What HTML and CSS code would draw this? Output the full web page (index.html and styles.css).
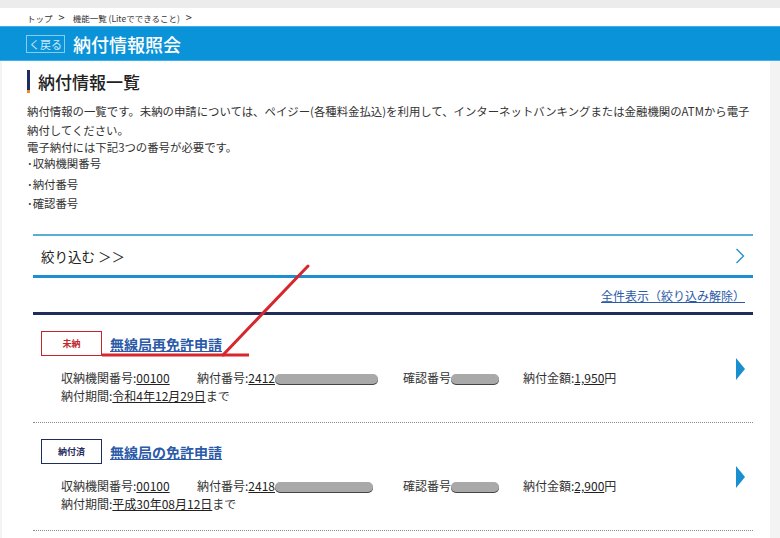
FILE: index.html
```html
<!DOCTYPE html>
<html lang="ja">
<head>
<meta charset="utf-8">
<title>納付情報照会</title>
<link rel="stylesheet" href="styles.css">
</head>
<body>
<div class="topbar"></div>
<div class="crumbs">トップ<span class="sep">&gt;</span>機能一覧 (Liteでできること)<span class="sep">&gt;</span></div>
<header class="header">
  <a class="back">く戻る</a>
  <h1 class="title">納付情報照会</h1>
</header>
<main class="page">
  <h2 class="heading">納付情報一覧</h2>
  <div class="intro">
    <p class="intro-p">納付情報の一覧です。未納の申請については、ペイジー(各種料金払込)を利用して、インターネットバンキングまたは金融機関のATMから電子<br>納付してください。</p>
    <p class="intro-need">電子納付には下記3つの番号が必要です。<br>･収納機関番号</p>
    <p class="intro-li first">･納付番号</p>
    <p class="intro-li">･確認番号</p>
  </div>

  <div class="content">
    <div class="filter">
      <span class="filter-label">絞り込む ＞＞</span>
      <svg class="filter-chev" width="10" height="16" viewBox="0 0 10 16"><polyline points="1.5,1 8.5,8 1.5,15" fill="none" stroke="#2a8fcc" stroke-width="1.4"/></svg>
    </div>
    <div class="reset"><a class="reset-link">全件表示（絞り込み解除）</a></div>

    <div class="item">
      <div class="item-main">
        <div class="item-head">
          <span class="badge badge-unpaid">未納</span>
          <a class="item-title">無線局再免許申請</a>
        </div>
        <div class="detail">
          <span class="col c1">収納機関番号:<u>00100</u></span><span class="col c2">納付番号:<u>2412</u><span class="mask m-long"></span></span><span class="col c3">確認番号<span class="mask m-short"></span></span><span class="col c4">納付金額:<u>1,950</u>円</span>
        </div>
        <div class="detail">納付期間:<u>令和4年12月29日</u>まで</div>
      </div>
      <svg class="arrow" width="9" height="22" viewBox="0 0 9 22"><polygon points="0,0 9,11 0,22" fill="#1a8fd0"/></svg>
    </div>

    <div class="item">
      <div class="item-main">
        <div class="item-head">
          <span class="badge badge-paid">納付済</span>
          <a class="item-title">無線局の免許申請</a>
        </div>
        <div class="detail">
          <span class="col c1">収納機関番号:<u>00100</u></span><span class="col c2">納付番号:<u>2418</u><span class="mask m-long2"></span></span><span class="col c3">確認番号<span class="mask m-short"></span></span><span class="col c4">納付金額:<u>2,900</u>円</span>
        </div>
        <div class="detail">納付期間:<u>平成30年08月12日</u>まで</div>
      </div>
      <svg class="arrow" width="9" height="22" viewBox="0 0 9 22"><polygon points="0,0 9,11 0,22" fill="#1a8fd0"/></svg>
    </div>
  </div>
</main>
<svg class="annot" width="780" height="538" viewBox="0 0 780 538">
  <line x1="308" y1="266" x2="223" y2="355" stroke="#d7262c" stroke-width="3" stroke-linecap="round"/>
  <line x1="102" y1="355" x2="249" y2="355" stroke="#d7262c" stroke-width="3"/>
</svg>
</body>
</html>
```

FILE: styles.css
```css
html, body {
  margin: 0;
  padding: 0;
}
body {
  width: 780px;
  height: 538px;
  overflow: hidden;
  position: relative;
  background: #f3f3f3;
  font-family: "Noto Sans CJK JP", "Noto Sans", sans-serif;
  color: #333;
}
.topbar {
  height: 8px;
  background: #ececec;
}
.crumbs {
  height: 18px;
  line-height: 18px;
  background: #fff;
  padding-left: 27px;
  font-size: 8.5px;
  color: #333;
}
.crumbs .sep {
  font-size: 11px;
  margin: 0 8px 0 6px;
}
.header {
  height: 33px;
  background: #0a93d8;
  border-top: 1px solid #3fb0e8;
  border-bottom: 1px solid #3fb0e8;
  display: flex;
  align-items: center;
  padding-left: 26px;
}
.back {
  box-sizing: border-box;
  width: 39px;
  height: 18px;
  border: 1px solid #86cdef;
  color: #cbe9f8;
  font-size: 11px;
  line-height: 16px;
  text-align: center;
  margin-right: 8px;
}
.title {
  margin: 0;
  font-size: 18px;
  font-weight: 500;
  color: #fff;
  line-height: 1;
}
.page {
  margin-left: 2px;
  width: 768px;
  background: #fff;
  padding: 9px 0 20px;
}
.heading {
  position: relative;
  margin: 0 0 0 25px;
  padding-left: 11px;
  height: 23px;
  line-height: 23px;
  font-size: 17px;
  font-weight: 500;
  color: #222;
}
.heading::before {
  content: "";
  position: absolute;
  left: 0;
  top: 0;
  width: 3px;
  height: 23px;
  background: linear-gradient(#1e2e62 0, #1e2e62 20px, #f08a24 20px);
}
.intro {
  margin: 9px 0 0 25px;
  font-size: 11.4px;
  color: #333;
}
.intro p {
  margin: 0;
}
.intro-p {
  line-height: 19px;
}
.intro-need {
  line-height: 16px;
  margin-top: -1px !important;
}
.intro-li {
  line-height: 19px;
}
.intro-li.first {
  margin-top: 4px !important;
}
.content {
  margin: 21px 0 0 31px;
  width: 720px;
}
.filter {
  box-sizing: border-box;
  height: 44px;
  border-top: 2px solid #5aaed4;
  border-bottom: 3px solid #1b8fcf;
  display: flex;
  align-items: center;
  justify-content: space-between;
  padding: 0 8px 0 8px;
}
.filter-label {
  font-size: 13.5px;
  color: #222;
}
.reset {
  height: 37px;
  box-sizing: border-box;
  border-bottom: 3px solid #1f2d5e;
  display: flex;
  align-items: center;
  justify-content: flex-end;
  padding-right: 8px;
}
.reset-link {
  font-size: 12px;
  color: #2b5aa8;
  text-decoration: underline;
}
.item {
  height: 108px;
  box-sizing: border-box;
  border-bottom: 1px dotted #8a8a8a;
  display: flex;
  align-items: flex-start;
  padding: 16px 8px 0;
}
.item-main {
  flex: 1;
}
.item-head {
  display: flex;
  align-items: center;
  height: 25px;
}
.badge {
  box-sizing: border-box;
  width: 61px;
  height: 25px;
  display: flex;
  align-items: center;
  justify-content: center;
  font-size: 9px;
  font-weight: 700;
  margin-right: 8px;
}
.badge-unpaid {
  border: 1px solid #c1272d;
  color: #c1272d;
}
.badge-paid {
  border: 1px solid #1f2d5e;
  color: #1f2d5e;
}
.item-title {
  font-size: 14px;
  font-weight: 700;
  color: #2b5aa8;
  text-decoration: underline;
}
.detail {
  padding-left: 20px;
  font-size: 12px;
  line-height: 18px;
  color: #333;
  white-space: nowrap;
}
.item-head + .detail {
  margin-top: 13px;
}
.detail u {
  color: #222;
}
.col {
  display: inline-block;
}
.c1 { width: 136px; }
.c2 { width: 206px; }
.c3 { width: 120px; }
.mask {
  display: inline-block;
  height: 10px;
  border-radius: 5px;
  background: #a9a9a9;
  vertical-align: -1px;
  box-shadow: 0 1px 0 #444;
}
.m-long { width: 103px; }
.m-long2 { width: 98px; }
.m-short { width: 48px; }
.arrow {
  display: block;
  margin-top: 27px;
}
.annot {
  position: absolute;
  left: 0;
  top: 0;
  pointer-events: none;
}
```
